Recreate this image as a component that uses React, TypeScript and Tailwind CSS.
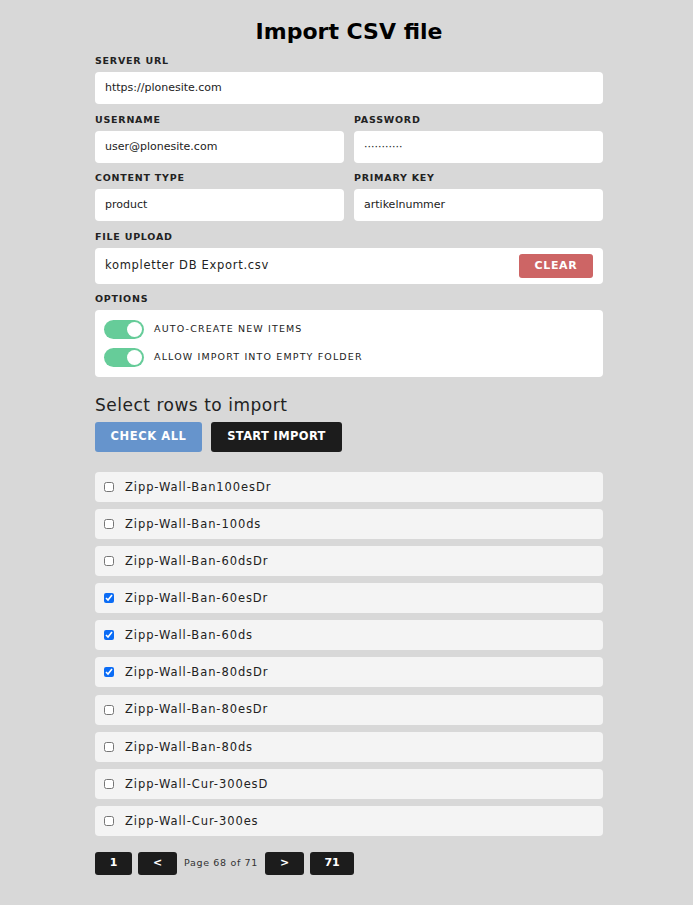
import React from "react";

const rows = [
  { name: "Zipp-Wall-Ban100esDr", checked: false },
  { name: "Zipp-Wall-Ban-100ds", checked: false },
  { name: "Zipp-Wall-Ban-60dsDr", checked: false },
  { name: "Zipp-Wall-Ban-60esDr", checked: true },
  { name: "Zipp-Wall-Ban-60ds", checked: true },
  { name: "Zipp-Wall-Ban-80dsDr", checked: true },
  { name: "Zipp-Wall-Ban-80esDr", checked: false },
  { name: "Zipp-Wall-Ban-80ds", checked: false },
  { name: "Zipp-Wall-Cur-300esD", checked: false },
  { name: "Zipp-Wall-Cur-300es", checked: false },
];

const Label = ({ children }: { children: React.ReactNode }) => (
  <div className="text-[9.5px] font-semibold tracking-[0.08em] text-[#222] uppercase leading-[10px] mb-[6px]">
    {children}
  </div>
);

const Field = ({ label, value }: { label: string; value: string }) => (
  <div className="flex-1">
    <Label>{label}</Label>
    <div className="h-[32px] bg-white rounded-[4px] flex items-center px-[10px] text-[11px] text-[#222]">
      {value}
    </div>
  </div>
);

const Toggle = ({ label }: { label: string }) => (
  <div className="flex items-center gap-[10px]">
    <div className="w-[40px] h-[19px] rounded-full bg-[#66cc99] flex items-center justify-end pr-[2px]">
      <div className="w-[15px] h-[15px] rounded-full bg-white" />
    </div>
    <span className="text-[9.5px] font-medium tracking-[0.12em] text-[#222]">{label}</span>
  </div>
);

const PageBtn = ({ children, w }: { children: React.ReactNode; w: string }) => (
  <button className={`${w} h-[23px] bg-[#1c1c1c] text-white rounded-[3px] text-[11px] font-bold`}>
    {children}
  </button>
);

export default function App() {
  return (
    <div className="min-h-[905px] bg-[#d8d8d8] font-['DejaVu_Sans',sans-serif]">
      <div className="w-[508px] ml-[95px] pt-[17px]">
        <h1 className="text-center text-[22px] font-bold text-black leading-[30px] mb-[9px]">
          Import CSV file
        </h1>

        {/* connection fields */}
        <div className="flex flex-col">
          <Field label="Server URL" value="https://plonesite.com" />
          <div className="flex gap-[10px] mt-[11px]">
            <Field label="Username" value="user@plonesite.com" />
            <Field label="Password" value="···········" />
          </div>
          <div className="flex gap-[10px] mt-[10px]">
            <Field label="Content type" value="product" />
            <Field label="Primary key" value="artikelnummer" />
          </div>
          <div className="mt-[11px]">
            <Label>File upload</Label>
            <div className="h-[36px] bg-white rounded-[4px] flex items-center justify-between pl-[10px] pr-[10px]">
              <span className="text-[11.5px] font-medium tracking-[0.06em] text-[#222]">
                kompletter DB Export.csv
              </span>
              <button className="w-[74px] h-[24px] bg-[#cd6565] rounded-[3px] text-white text-[11px] font-bold tracking-[0.06em]">
                CLEAR
              </button>
            </div>
          </div>
          <div className="mt-[10px]">
            <Label>Options</Label>
            <div className="bg-white rounded-[4px] px-[9px] py-[10px] flex flex-col gap-[9px]">
              <Toggle label="AUTO-CREATE NEW ITEMS" />
              <Toggle label="ALLOW IMPORT INTO EMPTY FOLDER" />
            </div>
          </div>
        </div>

        {/* rows */}
        <h2 className="mt-[17px] text-[17px] font-medium tracking-[0.03em] text-[#222] leading-[22px]">
          Select rows to import
        </h2>
        <div className="flex gap-[9px] mt-[6px]">
          <button className="w-[107px] h-[30px] bg-[#6694cc] rounded-[3px] text-white text-[11.5px] font-bold tracking-[0.05em]">
            CHECK ALL
          </button>
          <button className="w-[131px] h-[30px] bg-[#1c1c1c] rounded-[3px] text-white text-[11.5px] font-bold tracking-[0.03em]">
            START IMPORT
          </button>
        </div>

        <div className="mt-[20px] flex flex-col gap-[7.1px]">
          {rows.map((r) => (
            <div key={r.name} className="h-[30px] bg-[#f4f4f4] rounded-[4px] flex items-center px-[9px] gap-[11px]">
              <input type="checkbox" defaultChecked={r.checked} className="w-[10px] h-[10px] m-0 accent-[#0b6cf5]" />
              <span className="text-[11.5px] tracking-[0.08em] text-[#222] pt-[1px]">{r.name}</span>
            </div>
          ))}
        </div>

        <div className="mt-[16px] flex items-center gap-[6px]">
          <PageBtn w="w-[37px]">1</PageBtn>
          <PageBtn w="w-[39px]">&lt;</PageBtn>
          <span className="text-[9.5px] font-medium tracking-[0.07em] text-[#333] px-[1px]">Page 68 of 71</span>
          <PageBtn w="w-[39px]">&gt;</PageBtn>
          <PageBtn w="w-[44px]">71</PageBtn>
        </div>
      </div>
    </div>
  );
}
